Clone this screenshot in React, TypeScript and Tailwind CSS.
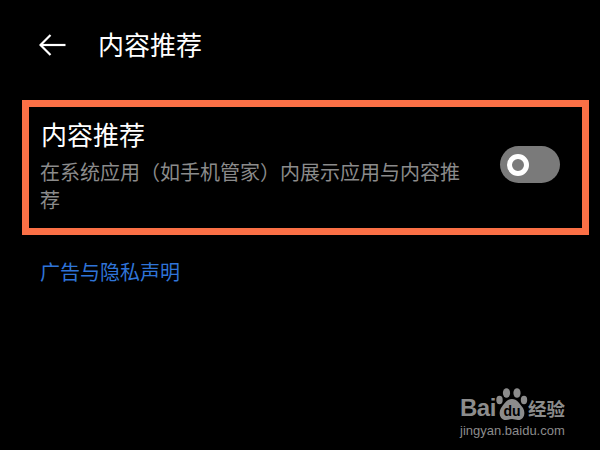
const cjk = "font-['Noto_Sans_CJK_SC','Liberation_Sans',sans-serif]";

function Watermark() {
    return (
        <div className="absolute left-[460px] top-[385px] flex flex-col gap-[1px] text-[#8c8c8c] font-['Liberation_Sans','Noto_Sans_CJK_SC',sans-serif]">
            <div className="flex items-end h-[36px]">
                <span className="text-[24px] leading-[27px] font-bold tracking-[-0.5px] w-[36px]">Bai</span>
                {/* paw */}
                <div className="relative w-[32px] h-[33px] shrink-0">
                    <svg width="32" height="33" viewBox="0 0 32 33" fill="#8c8c8c">
                        <ellipse cx="3.5" cy="12" rx="3.2" ry="4.2" />
                        <ellipse cx="10.5" cy="5" rx="3.6" ry="4.8" />
                        <ellipse cx="21" cy="5" rx="3.6" ry="4.8" />
                        <ellipse cx="28" cy="12" rx="3.2" ry="4.2" />
                        <path d="M16 11c5 0 8 5 11 9 3 5 1 12-5 12-2.5 0-4-1-6-1s-3.5 1-6 1c-6 0-8-7-5-12 3-4 6-9 11-9z" />
                    </svg>
                    <span className="absolute inset-x-0 bottom-[1px] text-center text-[14px] leading-[18px] font-bold text-black">du</span>
                </div>
                <span className={`text-[18.5px] leading-[26px] font-bold ${cjk}`}>经验</span>
            </div>
            <p className="text-[13px] leading-[18px] whitespace-nowrap">jingyan.baidu.com</p>
        </div>
    );
}

export default function App() {
    return (
        <div className={`relative w-[600px] h-[450px] overflow-hidden bg-black text-white ${cjk}`}>
            <header className="flex items-center gap-[32px] h-[90px] pl-[39px]">
                <svg width="27" height="22" viewBox="0 0 27 22" fill="none" stroke="white" strokeWidth="2.2" className="-mt-[1px]">
                    <path d="M26.5 11H1.5" />
                    <path d="M11.5 1L1.5 11L11.5 21" />
                </svg>
                <h1 className="-mt-[2px] text-[26px] leading-[36px]">内容推荐</h1>
            </header>

            <div className="mt-[10px] mx-[22px] w-[567px] h-[135px] border-[7px] border-[#fb7046] flex items-start pl-[12px] gap-[34px]">
                <div className="w-[425px] pt-[9px] shrink-0 flex flex-col gap-[6px]">
                    <h2 className="text-[26px] leading-[36px]">内容推荐</h2>
                    <p className="text-[20px] leading-[28px] text-[#8b8b8b] -ml-[1px]">
                        在系统应用（如手机管家）内展示应用与内容推荐
                    </p>
                </div>
                <div className="mt-[39px] w-[60px] h-[37px] rounded-full bg-[#7a7a7a] flex items-center pl-[7px]">
                    <div className="w-[22px] h-[22px] rounded-full border-[5px] border-white" />
                </div>
            </div>

            <p className="mt-[23px] pl-[40px] text-[20px] leading-[28px] text-[#2f74d8]">广告与隐私声明</p>

            <Watermark />
        </div>
    );
}
